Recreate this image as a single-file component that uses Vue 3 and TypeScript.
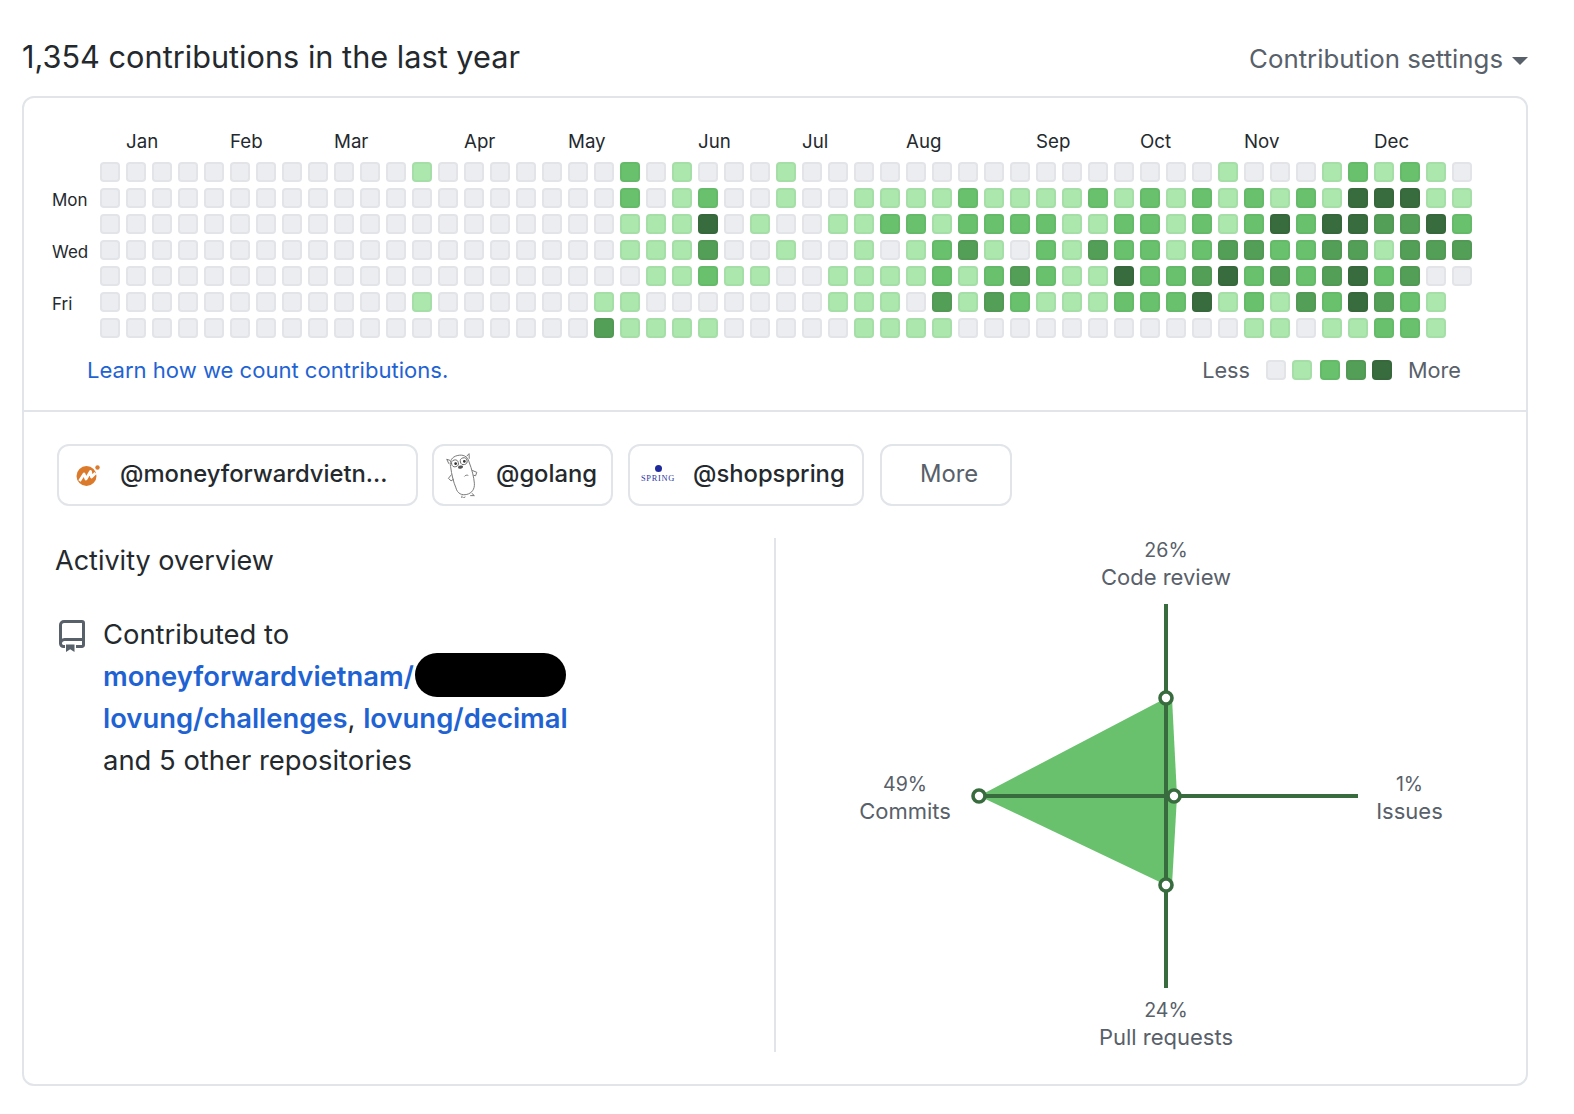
<script setup lang="ts">
const rows: string[] = [
  '00000000000010000' + '0002010001000000000' + '00000001000121210',
  '00000000000000000' + '0002012001001111211' + '11212121212144411',
  '00000000000000000' + '0001114010011221222' + '21122121242443342',
  '00000000000000000' + '0001113001001012310' + '21322123322331333',
  '00000000000000000' + '0000112110011112123' + '21142234232342300',
  '00000000000010000' + '0011000000011103132' + '1112224121324321x',
  '00000000000000000' + '0031111000001111000' + '0000000011011221x'
]

interface Cell { id: string; level: number }

const cells: Cell[] = []
for (let col = 0; col < 53; col++) {
  for (let row = 0; row < 7; row++) {
    const ch = rows[row][col]
    if (ch !== 'x' && ch !== undefined) cells.push({ id: `${col}-${row}`, level: Number(ch) })
  }
}

const months = [
  { name: 'Jan', col: 1 }, { name: 'Feb', col: 5 }, { name: 'Mar', col: 9 },
  { name: 'Apr', col: 14 }, { name: 'May', col: 18 }, { name: 'Jun', col: 23 },
  { name: 'Jul', col: 27 }, { name: 'Aug', col: 31 }, { name: 'Sep', col: 36 },
  { name: 'Oct', col: 40 }, { name: 'Nov', col: 44 }, { name: 'Dec', col: 49 }
]
const days = ['', 'Mon', '', 'Wed', '', 'Fri', '']
const polygon = '979,796 1166,698 1172,698 1177,796 1172,885 1166,885'
const dots = [[979, 796], [1166, 698], [1174, 796], [1166, 885]]
</script>

<template>
  <main class="page">
    <header class="head">
      <h2 class="title">1,354 contributions in the last year</h2>
      <span class="settings">Contribution settings<i class="caret"></i></span>
    </header>

    <section class="card">
      <div class="graph">
        <div class="months">
          <span v-for="m in months" :key="m.name" class="month" :style="{ gridColumnStart: m.col + 1 }">{{ m.name }}</span>
        </div>
        <div class="calendar">
          <div class="days">
            <span v-for="(d, i) in days" :key="i" class="day">{{ d }}</span>
          </div>
          <div class="cells">
            <span v-for="c in cells" :key="c.id" class="cell" :class="`l${c.level}`"></span>
          </div>
        </div>
        <div class="foot">
          <a class="learn">Learn how we count contributions.</a>
          <div class="legend">
            <span class="legend-text less">Less</span>
            <span class="cell l0"></span>
            <span class="cell l1 wide"></span>
            <span class="cell l2"></span>
            <span class="cell l3"></span>
            <span class="cell l4"></span>
            <span class="legend-text more">More</span>
          </div>
        </div>
      </div>

      <div class="lower">
        <div class="chips">
          <button class="chip chip-mf">
            <svg class="logo" viewBox="0 0 26 26" width="26" height="26">
              <circle cx="11.5" cy="14" r="10" fill="#dc7a2c" />
              <circle cx="22.5" cy="5.5" r="2.2" fill="#dc7a2c" />
              <path d="M4.5 19 L9 12 L11 17 L15.5 9.5 L16.5 15 L20.5 11" fill="none" stroke="#fff" stroke-width="2.8" stroke-linejoin="round" />
            </svg>
            <span>@moneyforwardvietn...</span>
          </button>
          <button class="chip chip-go">
            <svg class="logo" viewBox="0 0 36 46" width="36" height="46">
              <g transform="rotate(-14 18 23)" fill="none" stroke="#777" stroke-width=".9">
                <path d="M9 12 C9 6 13 3 18 3 C24 3 28 6 28 12 C29 20 29 28 28 34 C27 40 23 43 18 43 C13 43 9 40 9 34 C8 28 8 20 9 12 Z" fill="#fff" />
                <path d="M10 6 L7 4 L8 9 M27 6 L30 4 L29 9 M8 20 L4 23 L6 26 L9 25 M29 21 L33 24 L31 27 L29 26 M13 43 L12 46 L16 45 M23 43 L25 46 L21 45" />
                <circle cx="14" cy="10" r="3.4" fill="#fff" stroke="#666" />
                <circle cx="23" cy="10" r="3.4" fill="#fff" stroke="#666" />
                <circle cx="14.6" cy="10.4" r="1.4" fill="#333" stroke="none" />
                <circle cx="23.6" cy="10.4" r="1.4" fill="#333" stroke="none" />
                <ellipse cx="18.5" cy="15" rx="2.6" ry="1.6" fill="#555" stroke="none" />
                <path d="M20 25 C21 24 23 24 24 25" />
              </g>
            </svg>
            <span>@golang</span>
          </button>
          <button class="chip chip-spring">
            <span class="logo logo-spring"><i class="dot"></i><b class="brand">SPRING</b></span>
            <span>@shopspring</span>
          </button>
          <button class="chip chip-more">More</button>
        </div>

        <div class="overview">
          <div class="left">
            <h3 class="ov-title">Activity overview</h3>
            <div class="repos">
              <svg class="repo-icon" viewBox="0 0 26 32" width="26" height="32">
                <path d="M5 1.5 H23 a1.5 1.5 0 0 1 1.5 1.5 V25 a1.5 1.5 0 0 1 -1.5 1.5 H17 M6 26.5 H4.5 A3 3 0 0 1 1.5 23.5 V5 A3.5 3.5 0 0 1 5 1.5 M1.5 23.5 A4 4 0 0 1 5.5 19.5 H24.5" fill="none" stroke="#586069" stroke-width="3" />
                <path d="M7 24.5 H15.5 V32 L11.2 29.2 L7 32 Z" fill="#586069" />
              </svg>
              <p class="repo-text">
                Contributed to<br />
                <span class="nowrap"><a class="repo">moneyforwardvietnam/</a><i class="redact"></i></span><br />
                <a class="repo">lovung/challenges</a>, <a class="repo">lovung/decimal</a><br />
                and 5 other repositories
              </p>
            </div>
          </div>
          <div class="right">
            <svg class="radar" viewBox="776 538 749 514" width="749" height="514">
              <polygon :points="polygon" fill="#69c16e" />
              <line x1="1166" y1="604" x2="1166" y2="988" class="axis" />
              <line x1="979" y1="796" x2="1358" y2="796" class="axis" />
              <circle v-for="d in dots" :key="d[0] + '-' + d[1]" :cx="d[0]" :cy="d[1]" r="6" class="node" />
              <text x="1166" y="557" class="pct">26%</text>
              <text x="1166" y="585" class="lbl">Code review</text>
              <text x="905" y="791" class="pct">49%</text>
              <text x="905" y="819" class="lbl">Commits</text>
              <text x="1409.5" y="791" class="pct">1%</text>
              <text x="1409.5" y="819" class="lbl">Issues</text>
              <text x="1166" y="1017" class="pct">24%</text>
              <text x="1166" y="1045" class="lbl">Pull requests</text>
            </svg>
          </div>
        </div>
      </div>
    </section>
  </main>
</template>

<style>
html, body { margin: 0; background: #fff; }
</style>

<style scoped>
.page {
  width: 1574px;
  height: 1114px;
  box-sizing: border-box;
  padding: 0 46px 0 22px;
  font-family: Inter, "Noto Sans", sans-serif;
  color: #24292e;
  background: #fff;
}
.head {
  height: 96px;
  display: flex;
  justify-content: space-between;
  align-items: flex-start;
  padding-top: 37px;
  box-sizing: border-box;
}
.title {
  margin: 0;
  font-size: 30.7px;
  line-height: 40px;
  font-weight: 400;
}
.settings {
  display: flex;
  align-items: center;
  font-size: 25.8px;
  line-height: 44px;
  color: #586069;
}
.caret {
  margin-left: 9px;
  margin-top: 4px;
  border: 8px solid transparent;
  border-top-color: #586069;
  border-bottom-width: 0;
}
.card {
  height: 990px;
  box-sizing: border-box;
  border: 2px solid #e1e4e8;
  border-radius: 12px;
}
.graph {
  height: 314px;
  box-sizing: border-box;
  padding: 32px 0 0 28px;
  border-bottom: 2px solid #e1e4e8;
}
.months {
  display: grid;
  grid-template-columns: repeat(53, 20px);
  column-gap: 6px;
  margin-left: 48px;
  height: 32px;
  font-size: 18.7px;
  line-height: 24px;
}
.month { grid-row: 1; white-space: nowrap; }
.calendar {
  display: flex;
}
.days {
  width: 48px;
  display: grid;
  grid-template-rows: repeat(7, 20px);
  row-gap: 6px;
  font-size: 17px;
  line-height: 24px;
}
.cells {
  display: grid;
  grid-template-rows: repeat(7, 20px);
  grid-auto-flow: column;
  grid-auto-columns: 20px;
  gap: 6px;
}
.cell {
  display: block;
  width: 20px;
  height: 20px;
  box-sizing: border-box;
  border-radius: 4px;
  border: 2px solid rgba(27, 31, 35, 0.04);
  background-clip: border-box;
}
.l0 { background: #ebedf0; }
.l1 { background: #ace7ae; }
.l2 { background: #69c16e; }
.l3 { background: #549f57; }
.l4 { background: #386c3e; }
.foot {
  display: flex;
  justify-content: space-between;
  align-items: center;
  margin-top: 20px;
  padding: 0 65px 0 35px;
  height: 24px;
}
.learn {
  font-size: 22.05px;
  color: #1f63d3;
}
.legend {
  display: flex;
  align-items: center;
  gap: 6px;
  font-size: 21.7px;
  color: #586069;
}
.legend .wide { margin-right: 2px; }
.less { margin-right: 10px; }
.more { margin-left: 10px; }
.lower { padding: 32px 0 0 31px; }
.chips {
  display: flex;
  gap: 15px;
  margin-left: 2px;
}
.chip {
  height: 62px;
  box-sizing: border-box;
  border: 2px solid #e1e4e8;
  border-radius: 12px;
  background: #fff;
  font-family: inherit;
  font-size: 23.8px;
  font-weight: 500;
  color: #24292e;
  display: flex;
  align-items: center;
  padding: 0 0 3px;
}
.chip .logo { margin-top: 2px; }
.chip-mf { width: 361px; padding-left: 16px; gap: 19px; }
.chip-go { width: 181px; margin-left: -1px; padding-left: 10px; gap: 16px; }
.chip-spring { width: 236px; padding-left: 11px; gap: 18px; }
.chip-more { width: 132px; margin-left: 1px; padding-left: 6px; justify-content: center; color: #586069; font-weight: 400; }
.logo-spring {
  width: 34px;
  display: flex;
  flex-direction: column;
  align-items: center;
  gap: 3px;
  padding-bottom: 2px;
}
.dot {
  width: 7px;
  height: 7px;
  border-radius: 50%;
  background: #1e2a9c;
}
.brand {
  font-family: "Liberation Serif", serif;
  font-size: 8.4px;
  line-height: 8px;
  font-weight: 400;
  letter-spacing: 0.7px;
  color: #2a35a5;
}
.overview {
  display: grid;
  grid-template-columns: 721px 749px;
  margin-top: 32px;
  height: 514px;
}
.left { border-right: 2px solid #e1e4e8; }
.ov-title {
  margin: 7px 0 0;
  font-size: 27px;
  line-height: 32px;
  font-weight: 400;
}
.repos {
  display: flex;
  gap: 18px;
  margin-top: 36px;
  padding-left: 4px;
}
.repo-icon { margin-top: 7px; flex: none; }
.repo-text {
  margin: 0;
  font-size: 27.4px;
  line-height: 42px;
}
.nowrap { white-space: nowrap; }
.repo { color: #1f63d3; font-weight: 600; }
.redact {
  display: inline-block;
  width: 151px;
  height: 44px;
  border-radius: 22px;
  background: #000;
  vertical-align: middle;
  margin: -7px 0 0 1px;
}
.radar { display: block; }
.axis { stroke: #386c3e; stroke-width: 4; }
.node { fill: #fff; stroke: #386c3e; stroke-width: 3.6; }
.pct { font-size: 19.6px; fill: #586069; text-anchor: middle; }
.lbl { font-size: 22px; fill: #586069; text-anchor: middle; }
</style>
